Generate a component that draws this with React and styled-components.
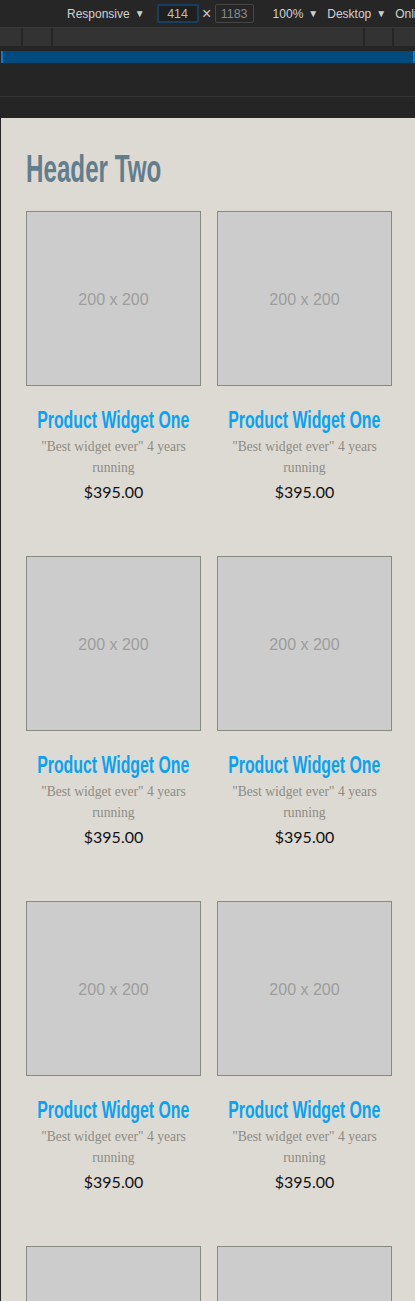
import React from "react";
import styled, { createGlobalStyle } from "styled-components";

// global
const GlobalStyle = createGlobalStyle`
   html, body {
      margin: 0;
      padding: 0;
      background: #252525;
      overflow: hidden;
   }
   body {
      width: 415px;
      height: 1301px;
   }
`;

// devtools chrome
const Toolbar = styled.div`
   height: 27px;
   border-bottom: 1px solid #383838;
   background: #262626;
   display: flex;
   align-items: center;
   padding-left: 67px;
   font-family: "Liberation Sans", Arial, sans-serif;
   font-size: 12px;
   color: #d2d2d2;
   white-space: nowrap;
   overflow: hidden;

   & > * {
      flex-shrink: 0;
   }
`;

const ToolItem = styled.span`
   margin-left: ${({ before }) => before || 0}px;
   margin-right: ${({ gap }) => gap}px;
   display: inline-flex;
   align-items: center;
   gap: 5px;
`;

const Caret = styled.span`
   font-size: 10px;
   color: #cfcfcf;
`;

const SizeBox = styled.span`
   box-sizing: border-box;
   width: ${({ width }) => width}px;
   height: 19px;
   display: inline-flex;
   align-items: center;
   justify-content: center;
   border: ${({ active }) => (active ? "2px solid #173e63" : "1px solid #464646")};
   border-radius: 2px;
   color: ${({ active }) => (active ? "#bdbdbd" : "#8a8a8a")};
   font-size: 12.5px;
   background: ${({ active }) => (active ? "#1f1f1f" : "#262626")};
`;

const Times = styled.span`
   width: 16px;
   text-align: center;
   font-size: 16px;
   color: #c8c8c8;
`;

const Ruler = styled.div`
   height: 18px;
   background: #333333;
   display: flex;
`;

const RulerCell = styled.div`
   width: ${({ width }) => width};
   flex: ${({ grow }) => (grow ? 1 : "none")};
   border-right: 2px solid #262626;
   &:last-child {
      border-right: none;
   }
`;

const Spacer = styled.div`
   height: ${({ height }) => height}px;
   background: #252525;
   border-bottom: ${({ line }) => (line ? "1px solid #363636" : "none")};
`;

const MediaBar = styled.div`
   height: 12px;
   background: #004a7c;
   border-left: 2px solid #0a7acb;
   border-right: 2px solid #0a7acb;
   margin: 0 0 0 1px;
`;

// page
const Page = styled.div`
   margin-left: 1px;
   background: #dddad4;
   height: 1183px;
   overflow: hidden;
   padding: 29px 23px 0 25px;
`;

// the reference uses a condensed display face, squeeze a bold sans to match
const Condensed = styled.span`
   display: inline-block;
   transform: scaleX(${({ squeeze }) => squeeze});
   transform-origin: ${({ origin }) => origin || "center"};
`;

const Heading = styled.h2`
   margin: 0 0 20px;
   font-family: "Liberation Sans", Arial, sans-serif;
   font-weight: 700;
   font-size: 39px;
   line-height: 44px;
   color: #627d8c;
   white-space: nowrap;
`;

const Grid = styled.div`
   display: grid;
   grid-template-columns: 175px 175px;
   column-gap: 16px;
   row-gap: 52px;
`;

const Card = styled.div`
   display: flex;
   flex-direction: column;
   align-items: center;
   text-align: center;
`;

const Placeholder = styled.div`
   box-sizing: border-box;
   width: 175px;
   height: 175px;
   padding-top: 3px;
   background: #cccccc;
   border: 1px solid #868b82;
   display: flex;
   align-items: center;
   justify-content: center;
   font-family: "Liberation Sans", Arial, sans-serif;
   font-size: 16px;
   color: #9d9d9d;
`;

const Title = styled.h3`
   margin: 21px 0 0;
   font-family: "Liberation Sans", Arial, sans-serif;
   font-weight: 700;
   font-size: 24px;
   line-height: 26px;
   color: #0aa2f2;
   white-space: nowrap;
`;

const Blurb = styled.p`
   margin: 3px 0 0;
   font-family: "Liberation Serif", "Times New Roman", serif;
   font-size: 13.6px;
   line-height: 21px;
   color: #8d8b83;
`;

const Price = styled.p`
   margin: 2px 0 0;
   font-family: Lato, "Open Sans", sans-serif;
   font-size: 16px;
   line-height: 24px;
   color: #111111;
`;

const products = Array.from({ length: 8 }, (_, i) => ({
   id: i,
   name: "Product Widget One",
   blurb: "\"Best widget ever\" 4 years running",
   price: "$395.00",
}));

function ProductCard({ product }) {
   return (
      <Card>
         <Placeholder>200 x 200</Placeholder>
         <Title>
            <Condensed squeeze={0.66}>{product.name}</Condensed>
         </Title>
         <Blurb>{product.blurb}</Blurb>
         <Price>{product.price}</Price>
      </Card>
   );
}

export default function App() {
   return (
      <>
         <GlobalStyle />
         <Toolbar>
            <ToolItem gap={12}>
               Responsive<Caret>▼</Caret>
            </ToolItem>
            <SizeBox active width={42}>414</SizeBox>
            <Times>×</Times>
            <SizeBox width={39}>1183</SizeBox>
            <ToolItem before={19} gap={9}>
               100%<Caret>▼</Caret>
            </ToolItem>
            <ToolItem gap={9}>
               Desktop<Caret>▼</Caret>
            </ToolItem>
            <ToolItem gap={0}>Online</ToolItem>
         </Toolbar>
         <Ruler>
            <RulerCell width="21px" />
            <RulerCell width="28px" />
            <RulerCell grow />
            <RulerCell width="27px" />
            <RulerCell width="21px" />
         </Ruler>
         <Spacer height={5} />
         <MediaBar />
         <Spacer height={33} line />
         <Spacer height={21} />
         <Page>
            <Heading>
               <Condensed squeeze={0.62} origin="left">
                  Header Two
               </Condensed>
            </Heading>
            <Grid>
               {products.map((p) => (
                  <ProductCard key={p.id} product={p} />
               ))}
            </Grid>
         </Page>
      </>
   );
}
